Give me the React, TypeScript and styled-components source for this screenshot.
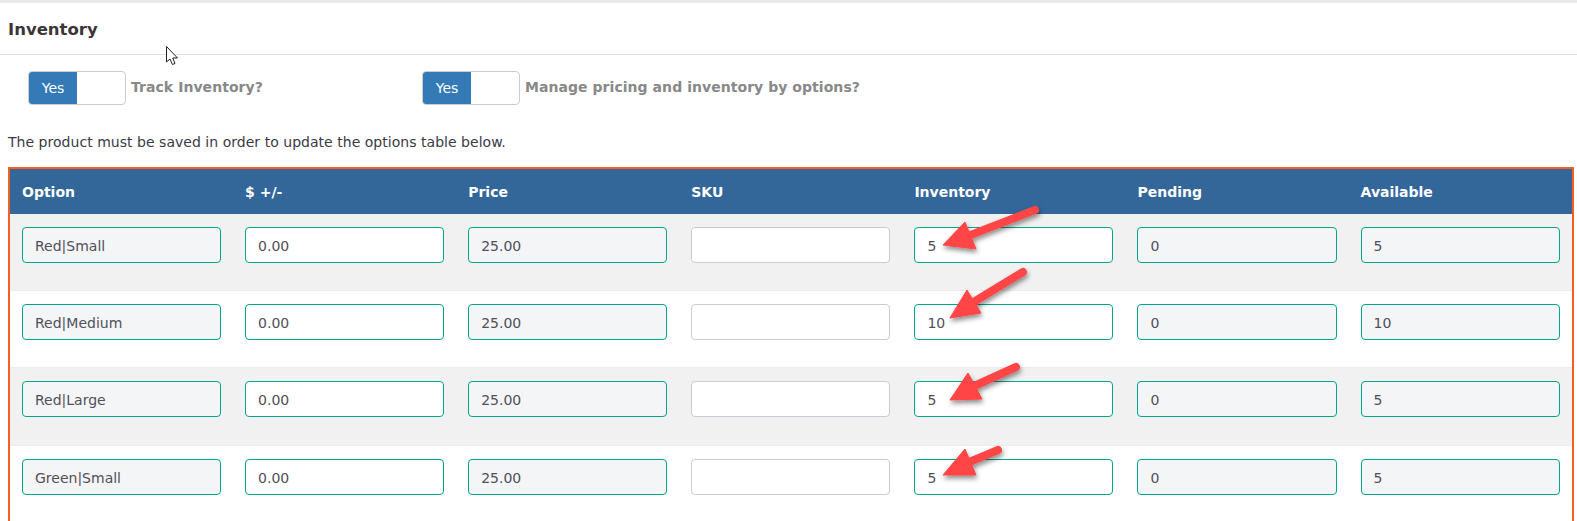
import styled, { createGlobalStyle } from "styled-components";

const GlobalStyle = createGlobalStyle`
  html, body {
    margin: 0;
    padding: 0;
    background: #fff;
    font-family: "DejaVu Sans", Verdana, sans-serif;
    color: #3a3a46;
  }
`;

const Page = styled.div`
  position: relative;
  width: 1577px;
  height: 521px;
  overflow: hidden;
  border-top: 3px solid #e9eaec;
  box-sizing: border-box;
`;

const SectionHeader = styled.div`
  height: 52px;
  padding: 2px 8px 0;
  display: flex;
  align-items: center;
  border-bottom: 1px solid #e0e0e0;
  box-sizing: border-box;
`;

const Title = styled.h3`
  margin: 0;
  font-size: 16.5px;
  font-weight: 700;
  color: #3b3538;
`;

const SwitchRow = styled.div`
  display: flex;
  padding: 16px 0 0 28px;
`;

const SwitchGroup = styled.div<{ $width: number }>`
  display: flex;
  align-items: center;
  gap: 5px;
  width: ${(p) => p.$width}px;
`;

const Switch = styled.div`
  width: 98px;
  height: 34px;
  border: 1px solid #ccc;
  border-radius: 4px;
  box-sizing: border-box;
  overflow: hidden;
  background: #fff;
`;

const SwitchOn = styled.div`
  width: 48px;
  height: 100%;
  background: #337ab7;
  color: #fff;
  font-size: 14px;
  display: flex;
  align-items: center;
  justify-content: center;
`;

const SwitchLabel = styled.span`
  font-size: 14px;
  letter-spacing: 0.05px;
  font-weight: 700;
  color: #888;
  position: relative;
  top: -1px;
`;

const Notice = styled.p`
  margin: 29px 0 0 8px;
  height: 17px;
  line-height: 17px;
  font-size: 14px;
  letter-spacing: 0.03px;
  color: #3a3a46;
`;

const TableFrame = styled.div`
  margin: 16px 0 0 8px;
  width: 1565.7px;
  border: 2px solid #f4601f;
  box-sizing: border-box;
`;

const Row = styled.div`
  display: grid;
  grid-template-columns: repeat(7, 1fr);
`;

const HeadRow = styled(Row)`
  height: 45px;
  background: #336699;
  align-items: center;
`;

const HeadCell = styled.div`
  padding: 0 12px;
  font-size: 14px;
  font-weight: 700;
  color: #fff;
`;

const BodyRow = styled(Row)<{ $shaded: boolean }>`
  height: 77.2px;
  padding-top: 13px;
  box-sizing: border-box;
  background: ${(p) => (p.$shaded ? "#f1f1f1" : "#fff")};
  border-bottom: 1px solid #ececec;
`;

const Cell = styled.div`
  padding: 0 12px;
`;

const Field = styled.input<{ $locked?: boolean; $plain?: boolean }>`
  display: block;
  width: 100%;
  height: 36px;
  padding: 2px 12px 0;
  box-sizing: border-box;
  border: 1px solid ${(p) => (p.$plain ? "#c9ccd8" : "#00a78a")};
  border-radius: 4px;
  background: ${(p) => (p.$locked ? "#f4f5f7" : "#fff")};
  font-family: inherit;
  font-size: 14px;
  color: #50505a;
  outline: none;
`;

const Overlay = styled.svg`
  position: absolute;
  left: 0;
  top: -3px;
  pointer-events: none;
`;

const columns = ["Option", "$ +/-", "Price", "SKU", "Inventory", "Pending", "Available"];

const rows = [
  { option: "Red|Small", inventory: "5" },
  { option: "Red|Medium", inventory: "10" },
  { option: "Red|Large", inventory: "5" },
  { option: "Green|Small", inventory: "5" },
];

const arrows = [
  { tail: [1035, 210], mid: [968, 236], head: "943,245 965,222 976,249" },
  { tail: [1023, 272], mid: [972, 303], head: "950,318 967,290 981,313" },
  { tail: [1016, 367], mid: [972, 387], head: "950,400 968,373 982,399" },
  { tail: [998, 450], mid: [967, 463], head: "943,475 965,449 976,475" },
];

export default function App() {
  return (
    <>
      <GlobalStyle />
      <Page>
        <SectionHeader>
          <Title>Inventory</Title>
        </SectionHeader>
        <SwitchRow>
          <SwitchGroup $width={394}>
            <Switch>
              <SwitchOn>Yes</SwitchOn>
            </Switch>
            <SwitchLabel>Track Inventory?</SwitchLabel>
          </SwitchGroup>
          <SwitchGroup $width={600}>
            <Switch>
              <SwitchOn>Yes</SwitchOn>
            </Switch>
            <SwitchLabel>Manage pricing and inventory by options?</SwitchLabel>
          </SwitchGroup>
        </SwitchRow>
        <Notice>The product must be saved in order to update the options table below.</Notice>
        <TableFrame>
          <HeadRow>
            {columns.map((c) => (
              <HeadCell key={c}>{c}</HeadCell>
            ))}
          </HeadRow>
          {rows.map((r, i) => (
            <BodyRow key={r.option} $shaded={i % 2 === 0}>
              <Cell><Field $locked readOnly value={r.option} /></Cell>
              <Cell><Field readOnly value="0.00" /></Cell>
              <Cell><Field $locked readOnly value="25.00" /></Cell>
              <Cell><Field $plain readOnly value="" /></Cell>
              <Cell><Field readOnly value={r.inventory} /></Cell>
              <Cell><Field $locked readOnly value="0" /></Cell>
              <Cell><Field $locked readOnly value={r.inventory} /></Cell>
            </BodyRow>
          ))}
        </TableFrame>
        <Overlay width="1577" height="521" viewBox="0 0 1577 521">
          <defs>
            <filter id="arrowShadow" x="-30%" y="-30%" width="170%" height="170%">
              <feDropShadow dx="1" dy="3" stdDeviation="2.5" floodColor="#000" floodOpacity="0.45" />
            </filter>
          </defs>
          {arrows.map((a) => (
            <g key={a.head} filter="url(#arrowShadow)" fill="#ff4545" stroke="#ff4545">
              <line x1={a.tail[0]} y1={a.tail[1]} x2={a.mid[0]} y2={a.mid[1]} strokeWidth="8" strokeLinecap="round" />
              <polygon points={a.head} strokeWidth="1" strokeLinejoin="round" />
            </g>
          ))}
          {/* mouse cursor */}
          <path
            d="M166.5 46.5 L166.5 62 L170 59 L172.5 64.5 L175 63.5 L172.8 58 L177.5 58 Z"
            fill="#fff"
            stroke="#222"
            strokeWidth="1"
            strokeLinejoin="round"
          />
        </Overlay>
      </Page>
    </>
  );
}
